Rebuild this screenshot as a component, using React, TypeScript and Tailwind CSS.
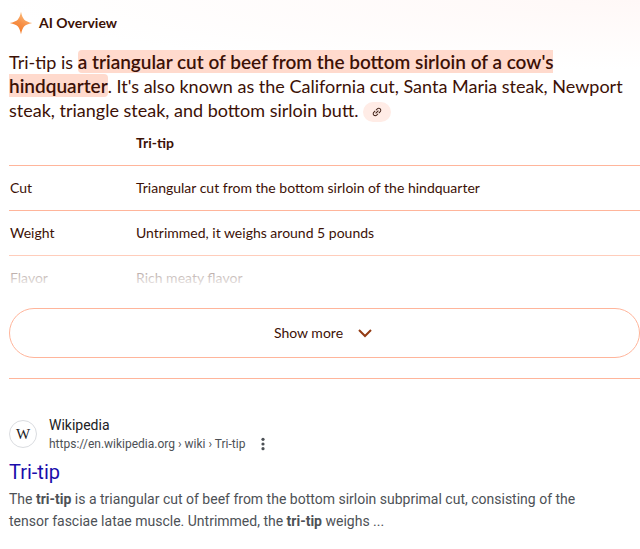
const rows = [
  { label: 'Cut', value: 'Triangular cut from the bottom sirloin of the hindquarter' },
  { label: 'Weight', value: 'Untrimmed, it weighs around 5 pounds' },
  { label: 'Flavor', value: 'Rich meaty flavor' },
];

function SparkIcon() {
  return (
    <svg viewBox="0 0 24 24" className="size-6" aria-hidden="true">
      <defs>
        <linearGradient id="spark" x1="0.75" y1="0.1" x2="0.3" y2="0.9">
          <stop offset="0" stopColor="#fbbd7c" />
          <stop offset="0.5" stopColor="#f7924a" />
          <stop offset="1" stopColor="#f47b28" />
        </linearGradient>
      </defs>
      <path
        fill="url(#spark)"
        d="M12 .8C12.8 4.8 14 7.200 15.300 8.700C16.800 10 19.200 11.200 23.200 12C19.200 12.800 16.800 14 15.300 15.300C14 16.800 12.800 19.200 12 23.200C11.200 19.200 10 16.800 8.700 15.300C7.200 14 4.800 12.800 .8 12C4.800 11.200 7.200 10 8.700 8.700C10 7.200 11.200 4.800 12 .8Z"
      />
    </svg>
  );
}

function LinkIcon() {
  return (
    <svg viewBox="0 0 24 24" className="size-3 -rotate-45" fill="#3c1a10" aria-hidden="true">
      <path d="M3.900 12c0-1.710 1.390-3.100 3.100-3.100h4V7H7c-2.760 0-5 2.240-5 5s2.240 5 5 5h4v-1.900H7c-1.710 0-3.100-1.390-3.100-3.100zM8 13h8v-2H8v2zm9-6h-4v1.900h4c1.710 0 3.100 1.390 3.100 3.100s-1.390 3.100-3.100 3.100h-4V17h4c2.760 0 5-2.240 5-5s-2.240-5-5-5z" />
    </svg>
  );
}

function Overview() {
  return (
    <section className="bg-[radial-gradient(100%_70px_at_top_right,#fff8f7,#ffffff)] pl-[9px] pt-[11px] font-['Lato',sans-serif] text-[#3c1106]">
      <header className="flex items-center gap-1.5">
        <SparkIcon />
        <h1 className="text-sm font-bold">AI Overview</h1>
      </header>

      <p className="mt-[15px] text-lg leading-6">
        Tri-tip is{' '}
        <mark className="rounded bg-[#ffdacd] text-[19px] leading-none font-semibold text-inherit">
          a triangular cut of beef from the bottom sirloin of a cow's hindquarter
        </mark>
        . It's also known as the California cut, Santa Maria steak, Newport steak, triangle steak, and bottom sirloin
        butt.{' '}
        <button
          aria-label="View related links"
          className="inline-flex h-5 w-7 items-center justify-center rounded-full bg-[#ffece6] align-middle"
        >
          <LinkIcon />
        </button>
      </p>

      <div className="relative h-[181px] overflow-hidden">
        <table className="w-full text-left text-sm">
          <thead>
            <tr className="h-[43px] border-b border-[#ffb59b]">
              <td className="w-[127px]" />
              <th scope="col" className="pb-0.5">Tri-tip</th>
            </tr>
          </thead>
          <tbody>
            {rows.map((row) => (
              <tr key={row.label} className="h-[45px] border-b border-[#ffb59b]">
                <th scope="row" className="pl-px font-normal">{row.label}</th>
                <td>{row.value}</td>
              </tr>
            ))}
          </tbody>
        </table>
        {/* Fades the collapsed rows out */}
        <div className="absolute inset-x-0 bottom-0 h-16 bg-linear-to-b from-white/0 to-white to-[80%]" />
      </div>

      <button className="mt-[5px] flex h-[50px] w-full items-center justify-center gap-3 rounded-full border border-[#ffb59b] text-sm">
        Show more
        <svg viewBox="0 0 20 20" className="size-5" fill="none" stroke="#933b13" strokeWidth="2" aria-hidden="true">
          <path d="M4 7L10 13L16 7" />
        </svg>
      </button>

      <hr className="mt-5 border-[#ffb59b]" />
    </section>
  );
}

function SearchResult() {
  return (
    <article className="px-[9px] pt-9 font-['Roboto',sans-serif]">
      <div className="flex items-center gap-3">
        <div className="flex size-7 items-center justify-center rounded-full border border-[#dadce0] font-['Liberation_Serif',serif] text-[15px] text-[#202124]">
          W
        </div>
        <div>
          <div className="text-sm leading-5 text-[#202124]">Wikipedia</div>
          <div className="flex items-center gap-2.5 text-xs leading-[18px] text-[#4d5156]">
            <cite className="not-italic">https://en.wikipedia.org › wiki › Tri-tip</cite>
            <button aria-label="About this result">
              <svg viewBox="0 0 24 24" className="size-4" fill="#4d5156" aria-hidden="true">
                <circle cx="12" cy="5" r="2.400" />
                <circle cx="12" cy="12" r="2.400" />
                <circle cx="12" cy="19" r="2.400" />
              </svg>
            </button>
          </div>
        </div>
      </div>
      <h3 className="mt-1.5 text-xl leading-[26px] text-[#1a0dab]">
        <a href="#tri-tip">Tri-tip</a>
      </h3>
      <p className="mt-[3px] max-w-[600px] text-sm leading-[22px] text-[#4d5156]">
        The <b>tri-tip</b> is a triangular cut of beef from the bottom sirloin subprimal cut, consisting of the tensor
        fasciae latae muscle. Untrimmed, the <b>tri-tip</b> weighs ...
      </p>
    </article>
  );
}

export default function App() {
  return (
    <main className="min-h-screen bg-white">
      <Overview />
      <SearchResult />
    </main>
  );
}
